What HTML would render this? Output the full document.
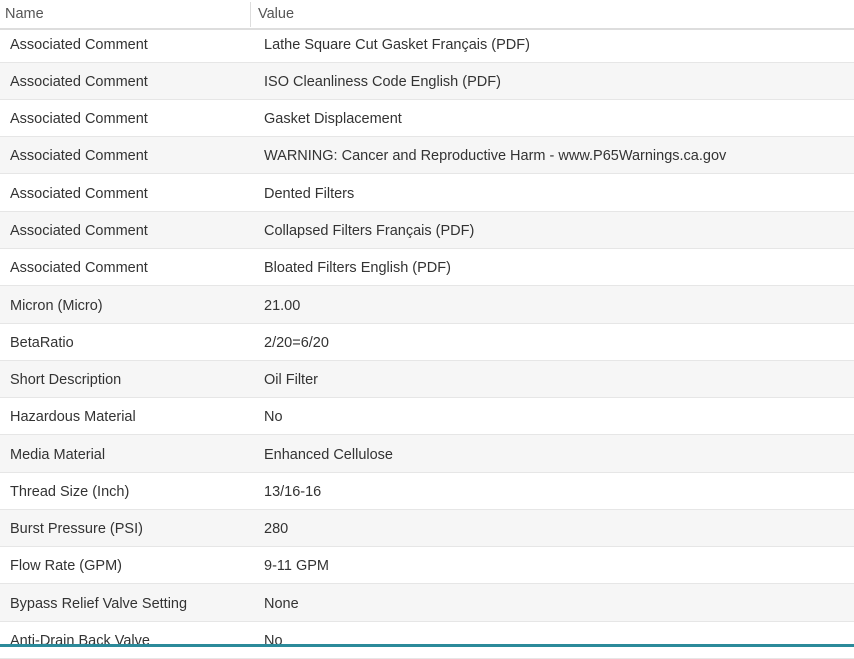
<!DOCTYPE html>
<html><head><style>
body{margin:0;width:854px;height:647px;overflow:hidden;background:#fff;font-family:"Liberation Sans",sans-serif;font-size:14.5px;color:#333;position:relative}
.hdr{position:absolute;top:0;left:0;width:854px;height:28px;border-bottom:2px solid #ddd;color:#555}
.hdr span{position:absolute;top:6px}
.div{position:absolute;left:250px;top:2px;width:1px;height:25px;background:#ddd}
.row{position:absolute;left:0;width:854px;border-bottom:1px solid #e6e6e6;box-sizing:border-box}
.row.g{background:#f6f6f6}
.row span{position:absolute;top:calc(50% + 1px);transform:translateY(-50%)}
.n{left:10px}.v{left:264px}
.bar{position:absolute;left:0;top:644px;width:854px;height:3px;background:#2b8a9a}
</style></head><body>
<div class="hdr"><span style="left:5px">Name</span><div class="div"></div><span style="left:258px">Value</span></div>
<div class="row" style="top:30px;height:33px"><span class="n" style="top:46%">Associated Comment</span><span class="v" style="top:46%">Lathe Square Cut Gasket Français (PDF)</span></div>
<div class="row g" style="top:63px;height:37px"><span class="n">Associated Comment</span><span class="v">ISO Cleanliness Code English (PDF)</span></div>
<div class="row" style="top:100px;height:37px"><span class="n">Associated Comment</span><span class="v">Gasket Displacement</span></div>
<div class="row g" style="top:137px;height:37px"><span class="n">Associated Comment</span><span class="v">WARNING: Cancer and Reproductive Harm - www.P65Warnings.ca.gov</span></div>
<div class="row" style="top:174px;height:38px"><span class="n">Associated Comment</span><span class="v">Dented Filters</span></div>
<div class="row g" style="top:212px;height:37px"><span class="n">Associated Comment</span><span class="v">Collapsed Filters Français (PDF)</span></div>
<div class="row" style="top:249px;height:37px"><span class="n">Associated Comment</span><span class="v">Bloated Filters English (PDF)</span></div>
<div class="row g" style="top:286px;height:38px"><span class="n">Micron (Micro)</span><span class="v">21.00</span></div>
<div class="row" style="top:324px;height:37px"><span class="n">BetaRatio</span><span class="v">2/20=6/20</span></div>
<div class="row g" style="top:361px;height:37px"><span class="n">Short Description</span><span class="v">Oil Filter</span></div>
<div class="row" style="top:398px;height:37px"><span class="n">Hazardous Material</span><span class="v">No</span></div>
<div class="row g" style="top:435px;height:38px"><span class="n">Media Material</span><span class="v">Enhanced Cellulose</span></div>
<div class="row" style="top:473px;height:37px"><span class="n">Thread Size (Inch)</span><span class="v">13/16-16</span></div>
<div class="row g" style="top:510px;height:37px"><span class="n">Burst Pressure (PSI)</span><span class="v">280</span></div>
<div class="row" style="top:547px;height:37px"><span class="n">Flow Rate (GPM)</span><span class="v">9-11 GPM</span></div>
<div class="row g" style="top:584px;height:38px"><span class="n">Bypass Relief Valve Setting</span><span class="v">None</span></div>
<div class="row" style="top:622px;height:37px"><span class="n">Anti-Drain Back Valve</span><span class="v">No</span></div>
<div class="bar"></div>
</body></html>
